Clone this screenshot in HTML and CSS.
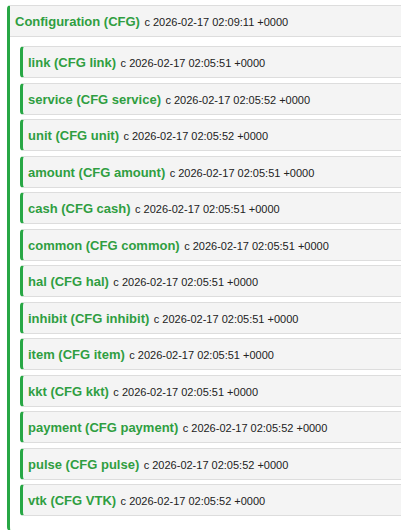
FILE: index.html
```html
<!DOCTYPE html>
<html>
<head>
<meta charset="utf-8">
<link rel="stylesheet" href="styles.css">
</head>
<body>
<div class="page">
  <div class="card outer">
    <div class="card-head"><span class="name">Configuration (CFG)</span> <span class="date">c 2026-02-17 02:09:11 +0000</span></div>
    <div class="card-body">
      <div class="card inner"><span class="name">link (CFG link)</span> <span class="date">c 2026-02-17 02:05:51 +0000</span></div>
      <div class="card inner"><span class="name">service (CFG service)</span> <span class="date">c 2026-02-17 02:05:52 +0000</span></div>
      <div class="card inner"><span class="name">unit (CFG unit)</span> <span class="date">c 2026-02-17 02:05:52 +0000</span></div>
      <div class="card inner"><span class="name">amount (CFG amount)</span> <span class="date">c 2026-02-17 02:05:51 +0000</span></div>
      <div class="card inner"><span class="name">cash (CFG cash)</span> <span class="date">c 2026-02-17 02:05:51 +0000</span></div>
      <div class="card inner"><span class="name">common (CFG common)</span> <span class="date">c 2026-02-17 02:05:51 +0000</span></div>
      <div class="card inner"><span class="name">hal (CFG hal)</span> <span class="date">c 2026-02-17 02:05:51 +0000</span></div>
      <div class="card inner"><span class="name">inhibit (CFG inhibit)</span> <span class="date">c 2026-02-17 02:05:51 +0000</span></div>
      <div class="card inner"><span class="name">item (CFG item)</span> <span class="date">c 2026-02-17 02:05:51 +0000</span></div>
      <div class="card inner"><span class="name">kkt (CFG kkt)</span> <span class="date">c 2026-02-17 02:05:51 +0000</span></div>
      <div class="card inner"><span class="name">payment (CFG payment)</span> <span class="date">c 2026-02-17 02:05:52 +0000</span></div>
      <div class="card inner"><span class="name">pulse (CFG pulse)</span> <span class="date">c 2026-02-17 02:05:52 +0000</span></div>
      <div class="card inner"><span class="name">vtk (CFG VTK)</span> <span class="date">c 2026-02-17 02:05:52 +0000</span></div>
    </div>
  </div>
</div>
</body>
</html>
```
FILE: styles.css
```css
html, body {
  margin: 0;
  padding: 0;
  background: #fff;
  overflow: hidden;
}
body {
  font-family: "Liberation Sans", Arial, sans-serif;
  color: #333;
}
.page {
  padding: 5px 0 0 7px;
}
.card {
  border-top: 1px solid #ddd;
  border-left: 3px solid #28a745;
  border-top-left-radius: 4px;
}
.outer {
  border-bottom-left-radius: 4px;
  padding-bottom: 10px;
}
.card-head {
  background: #f4f4f4;
  height: 30px;
  line-height: 30px;
  padding-left: 5px;
  border-bottom: 1px solid #ddd;
  white-space: nowrap;
}
.card-body {
  padding: 9px 0 0 10px;
}
.inner {
  background: #f4f4f4;
  border-bottom: 1px solid #ddd;
  border-bottom-left-radius: 4px;
  height: 30px;
  line-height: 30px;
  padding-left: 5px;
  margin-bottom: 4.5px;
  white-space: nowrap;
}
.name {
  font-weight: bold;
  font-size: 13px;
  color: #2f9e41;
}
.date {
  font-size: 11px;
  color: #222;
}
```
